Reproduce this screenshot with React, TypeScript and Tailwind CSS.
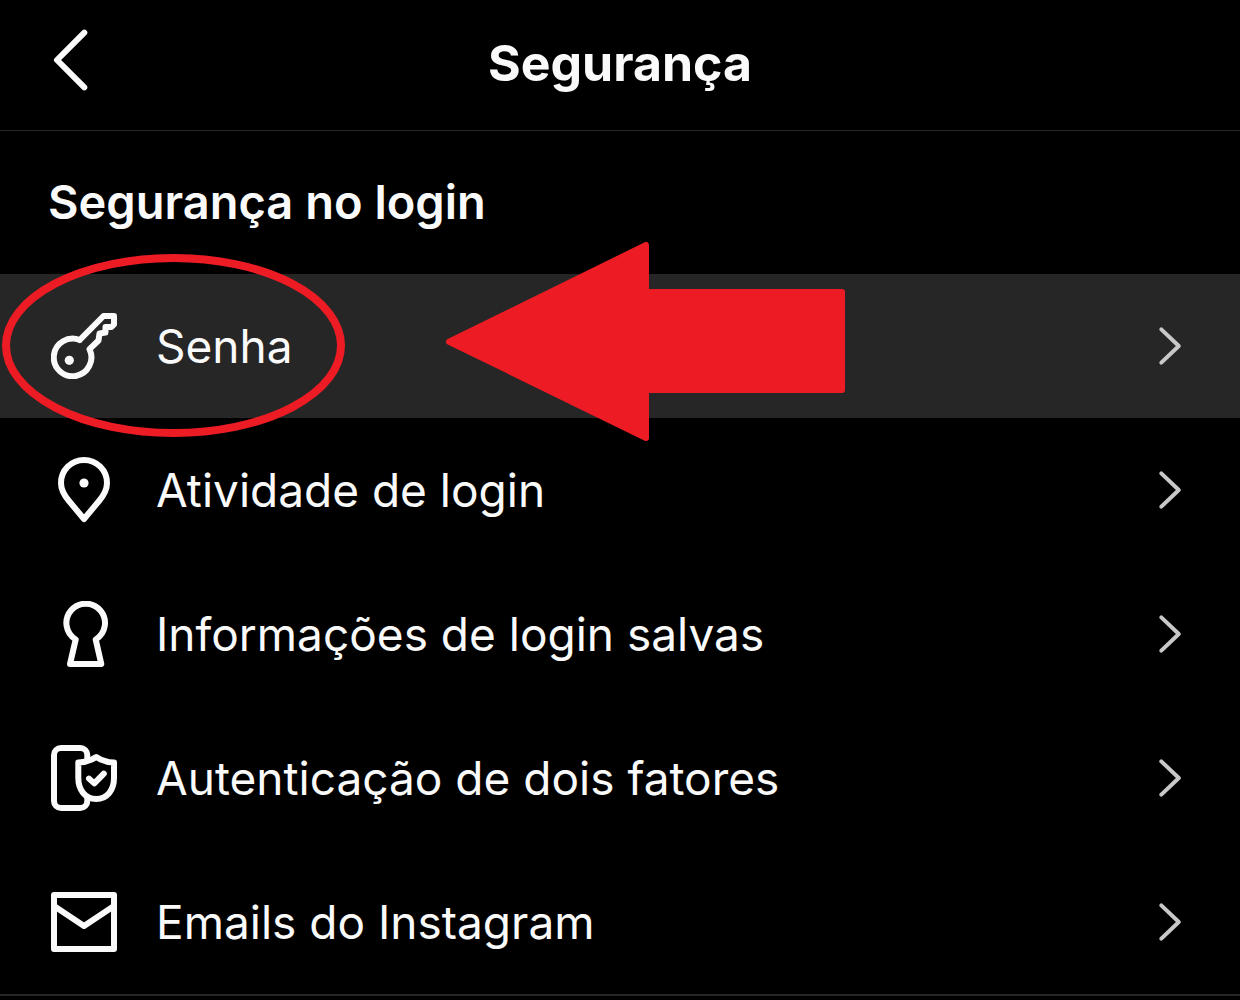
import type { ReactNode } from "react";

interface SecurityItem {
  id: string;
  label: string;
  icon: ReactNode;
  highlighted?: boolean;
}

function Icon({ children }: { children: ReactNode }) {
  return (
    <svg
      viewBox="0 0 66 66"
      className="size-[66px] shrink-0"
      fill="none"
      stroke="currentColor"
      strokeWidth="6"
      strokeLinecap="round"
      strokeLinejoin="round"
      aria-hidden="true"
    >
      {children}
    </svg>
  );
}

function KeyIcon() {
  return (
    <Icon>
      <path d="M28.7 27 L52.5 3 H63 V11.5 L60.5 14 H54.5 V19.5 L48.5 20.5 L47.5 27.5 L38.5 36.2 A18.8 18.8 0 1 1 28.7 27" />
      <circle cx="18.3" cy="47.3" r="4.6" fill="currentColor" stroke="none" />
    </Icon>
  );
}

function PinIcon() {
  return (
    <Icon>
      <path d="M33 62 L18 44 C12.5 37.5 10 32 10 26 a23 23 0 0 1 46 0 C56 32 53.5 37.5 48 44 Z" />
      <circle cx="33" cy="26" r="4.6" fill="currentColor" stroke="none" />
    </Icon>
  );
}

function KeyholeIcon() {
  return (
    <Icon>
      <path d="M24.7 38.5 A19.3 19.3 0 1 1 44.7 38.5 L50.3 63 H19 Z" />
    </Icon>
  );
}

function TwoFactorIcon() {
  return (
    <Icon>
      <path d="M36.3 14 V10 a7 7 0 0 0 -7 -7 H10 a7 7 0 0 0 -7 7 V56 a7 7 0 0 0 7 7 H29.3 a7 7 0 0 0 7 -7 V53" />
      <path d="M45.2 12 C40 15.5 34 17.3 27.3 17.6 V33 C27.3 44.5 34 54 45.2 54 C56.5 54 63 44.5 63 33 V17.6 C56.5 17.3 50.5 15.5 45.2 12 Z" />
      <path d="M38 33.6 L43.3 38.4 L52.8 28.6" />
    </Icon>
  );
}

function MailIcon() {
  return (
    <Icon>
      <rect x="3" y="6" width="60" height="54" />
      <path d="M3 17 L33 37 L63 17" />
    </Icon>
  );
}

function ChevronRight() {
  return (
    <svg
      viewBox="0 0 24 40"
      className="h-10 w-6 shrink-0 text-[#c8c8c8]"
      fill="none"
      stroke="currentColor"
      strokeWidth="4"
      strokeLinecap="round"
      strokeLinejoin="round"
      aria-hidden="true"
    >
      <path d="M3.3 3.4 L20.8 20 L3.3 36.6" />
    </svg>
  );
}

// Circle and arrow that point at the highlighted row
function Callout() {
  return (
    <>
      <svg
        viewBox="0 0 344 184"
        className="pointer-events-none absolute -top-5 left-0.5 h-[184px] w-[344px]"
        aria-hidden="true"
      >
        <ellipse cx="171.5" cy="91.5" rx="167.5" ry="87.5" fill="none" stroke="#ed1c24" strokeWidth="8" />
      </svg>
      <svg
        viewBox="0 0 400 200"
        className="pointer-events-none absolute -top-[33px] left-[446px] h-[200px] w-[400px]"
        aria-hidden="true"
      >
        <path
          d="M3 100.7 L200 4 V51 H396 V149 H200 V197 Z"
          fill="#ed1c24"
          stroke="#ed1c24"
          strokeWidth="6"
          strokeLinejoin="round"
        />
      </svg>
    </>
  );
}

const items: SecurityItem[] = [
  { id: "senha", label: "Senha", icon: <KeyIcon />, highlighted: true },
  { id: "atividade", label: "Atividade de login", icon: <PinIcon /> },
  { id: "informacoes", label: "Informações de login salvas", icon: <KeyholeIcon /> },
  { id: "autenticacao", label: "Autenticação de dois fatores", icon: <TwoFactorIcon /> },
  { id: "emails", label: "Emails do Instagram", icon: <MailIcon /> },
];

export default function App() {
  return (
    <div className="min-h-screen bg-black font-['Inter','Liberation_Sans',sans-serif] text-[#fafafa]">
      <header className="grid h-[131px] grid-cols-[1fr_auto_1fr] items-center border-b border-[#262626] px-12 pb-1">
        <button type="button" aria-label="Voltar" className="justify-self-start">
          <svg
            viewBox="0 0 44 70"
            className="h-[70px] w-11"
            fill="none"
            stroke="currentColor"
            strokeWidth="6"
            strokeLinecap="round"
            strokeLinejoin="round"
            aria-hidden="true"
          >
            <path d="M36.3 4.7 L9 32 L36.3 59.3" />
          </svg>
        </button>
        <h1 className="text-[50px] leading-none font-bold">Segurança</h1>
      </header>

      <main>
        <h2 className="flex h-[143px] items-center px-12 text-[47px] font-semibold">Segurança no login</h2>
        <ul className="border-b-2 border-[#262626]">
          {items.map((item) => (
            <li key={item.id} className={item.highlighted ? "relative bg-[#262626]" : ""}>
              <a href={`#${item.id}`} className="flex h-36 items-center pr-[58px] pl-[51px]">
                {item.icon}
                <span className="ml-[39px] flex-1 text-[46px]">{item.label}</span>
                <ChevronRight />
              </a>
              {item.highlighted && <Callout />}
            </li>
          ))}
        </ul>
      </main>
    </div>
  );
}
